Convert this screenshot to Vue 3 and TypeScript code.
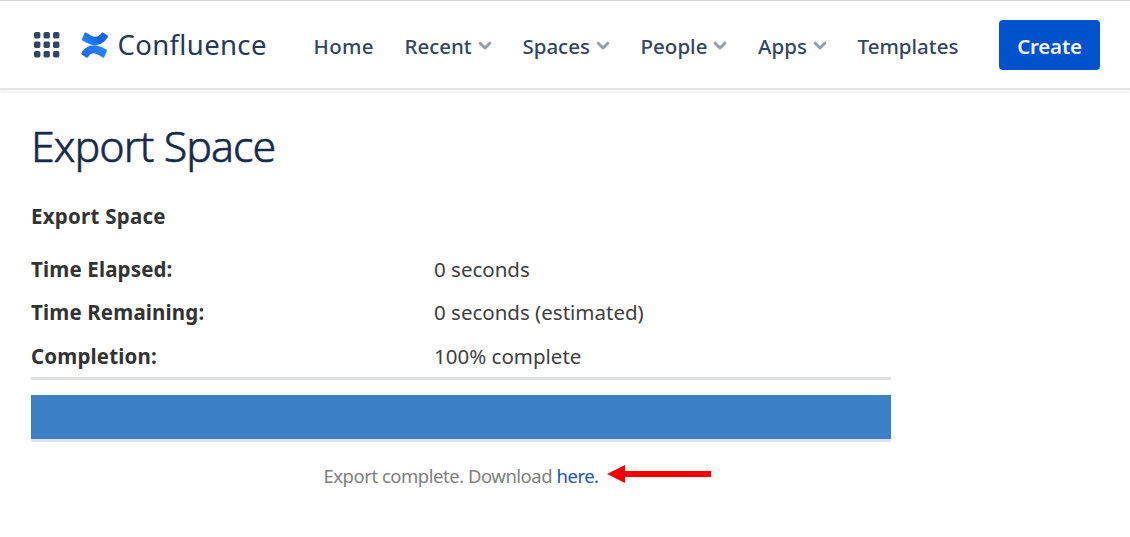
<script setup lang="ts">
interface NavItem {
  label: string
  menu: boolean
}

const navItems: NavItem[] = [
  { label: 'Home', menu: false },
  { label: 'Recent', menu: true },
  { label: 'Spaces', menu: true },
  { label: 'People', menu: true },
  { label: 'Apps', menu: true },
  { label: 'Templates', menu: false }
]

const progress = 100

const details = [
  { label: 'Time Elapsed:', value: '0 seconds' },
  { label: 'Time Remaining:', value: '0 seconds (estimated)' },
  { label: 'Completion:', value: `${progress}% complete` }
]

const dots = [0, 9.5, 19]
</script>

<template>
  <div class="page">
    <header class="header">
      <svg class="switcher" viewBox="0 0 26 26" width="26" height="26">
        <template v-for="y in dots" :key="y">
          <rect v-for="x in dots" :key="x" :x="x" :y="y" width="6.4" height="6.4" rx="1.7" />
        </template>
      </svg>
      <a class="brand">
        <svg class="brand-mark" viewBox="0 0 28 26" width="28" height="26">
          <defs>
            <linearGradient id="mark-top" x1="1" y1="0" x2="0" y2="0.4">
              <stop offset="0" stop-color="#1868e4" />
              <stop offset="0.5" stop-color="#1463df" />
              <stop offset="1" stop-color="#2684ff" />
            </linearGradient>
            <linearGradient id="mark-bottom" x1="0" y1="1" x2="1" y2="0.6">
              <stop offset="0" stop-color="#1868e4" />
              <stop offset="0.5" stop-color="#2476f0" />
              <stop offset="1" stop-color="#2684ff" />
            </linearGradient>
          </defs>
          <path
            fill="url(#mark-top)"
            d="M4.800.4Q4 0 3.600.8L.9 7.200Q.6 8 1.400 8.400C5 10.200 8.600 13 14.500 13C20.500 13 24 9.500 27.100 4.800Q27.400 4 26.700 3.600L22 .4Q21.200 0 20.700.7C18.600 3.400 17.200 4.800 14.600 4.800C11.600 4.800 8.600 2.400 4.800.4Z"
          />
          <path
            fill="url(#mark-bottom)"
            d="M22 25.600Q22.800 26 23.200 25.200L25.900 18.800Q26.300 18 25.500 17.600C21.800 15.800 18.700 13.200 13 13.200C7 13.200 3.400 16.300.4 21Q0 21.800.8 22.400L5.600 25.700Q6.400 26.100 6.900 25.300C8.800 22.700 10.300 21.200 12.900 21.200C15.800 21.200 18.600 23.800 22 25.600Z"
          />
        </svg>
        <span class="brand-name">Confluence</span>
      </a>
      <nav class="nav">
        <a v-for="item in navItems" :key="item.label" class="nav-item">
          <span>{{ item.label }}</span>
          <svg v-if="item.menu" class="chevron" viewBox="0 0 14 10" width="14" height="10">
            <path d="M2.200 2.200 7 7 11.800 2.200" />
          </svg>
        </a>
      </nav>
      <button class="create" type="button">Create</button>
    </header>

    <main class="content">
      <h1 class="title">Export Space</h1>
      <h2 class="subtitle">Export Space</h2>
      <dl class="details">
        <div v-for="row in details" :key="row.label" class="detail">
          <dt>{{ row.label }}</dt>
          <dd>{{ row.value }}</dd>
        </div>
      </dl>
      <div class="progress">
        <div class="progress-bar" :style="{ width: `${progress}%` }"></div>
      </div>
      <div class="status">
        <p class="message">Export complete. Download <a class="download">here.</a></p>
        <svg class="arrow" viewBox="0 0 104 18" width="104" height="18">
          <path d="M0 9 18 0V6H104V12H18V18Z" />
        </svg>
      </div>
    </main>
  </div>
</template>

<style>
body {
  background: #fff;
}
</style>

<style scoped>
.page {
  height: 537px;
  box-sizing: border-box;
  overflow: hidden;
  border-top: 1px solid #d4d4d4;
  background: #fff;
  font-family: 'Noto Sans', 'Open Sans', sans-serif;
  font-size: 20.5px;
  color: #333;
}

.header {
  display: flex;
  align-items: center;
  height: 87px;
  padding: 0 30px 0 34px;
  border-bottom: 2px solid #e4e5e7;
  box-shadow: 0 3px 2px #f5f5f5;
}

.switcher {
  flex: none;
  fill: #344563;
}

.brand {
  display: flex;
  align-items: center;
  width: 186px;
  margin-left: 21px;
}

.brand-mark {
  flex: none;
}

.brand-name {
  margin-left: 8.5px;
  font-size: 27.5px;
  line-height: 36px;
  letter-spacing: 0.35px;
  color: #253858;
}

.nav {
  display: flex;
  gap: 30.7px;
  margin: 2px 0 0 46.5px;
}

.nav-item {
  display: flex;
  align-items: center;
  font-size: 20.5px;
  font-weight: 500;
  line-height: 30px;
  color: #344563;
  white-space: nowrap;
}

.nav-item:first-child {
  letter-spacing: 0.3px;
}

.chevron {
  margin-left: 6px;
  fill: none;
  stroke: #989da6;
  stroke-width: 3;
  stroke-linecap: round;
  stroke-linejoin: round;
}

.create {
  width: 101px;
  height: 50px;
  margin-left: auto;
  padding: 2px 0 0;
  border: 0;
  border-radius: 4px;
  background: #0052cc;
  color: #f4f5f7;
  font: 600 20.5px 'Noto Sans', 'Open Sans', sans-serif;
  letter-spacing: -0.2px;
}

.content {
  width: 860px;
  padding: 25px 0 0 31px;
}

.title {
  margin: 0;
  font-size: 43px;
  font-weight: 300;
  line-height: 61px;
  letter-spacing: -0.95px;
  color: #172b4d;
  -webkit-text-stroke: 0.6px #172b4d;
}

.subtitle {
  margin: 25px 0 0;
  font-size: 20.5px;
  font-weight: 700;
  line-height: 30px;
  letter-spacing: 0.25px;
}

.details {
  margin: 16px 0 0;
  border-bottom: 3px solid #dfe0e1;
}

.detail {
  display: flex;
  height: 43.3px;
  line-height: 45px;
}

.detail dt {
  width: 403px;
  font-weight: 700;
  letter-spacing: 0.15px;
}

.detail dd {
  margin: 0;
  color: #404040;
}

.progress {
  margin-top: 15px;
  border-bottom: 3px solid #dfe3ec;
}

.progress-bar {
  height: 44px;
  background: #3b7fc4;
}

.status {
  display: flex;
  align-items: center;
  margin: 19px 0 0 292.5px;
}

.message {
  margin: 0;
  font-size: 18.5px;
  line-height: 30px;
  letter-spacing: -0.48px;
  color: #808080;
  white-space: nowrap;
}

.download {
  color: #2456b5;
}

.arrow {
  margin: 0 0 4px 8px;
  fill: #f40000;
}
</style>
